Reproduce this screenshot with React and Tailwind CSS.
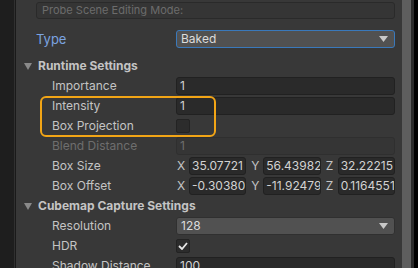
import React from "react";

const font = { fontFamily: "Inter, 'Noto Sans', sans-serif" };

function Fold() {
  return (
    <svg width="8" height="7" viewBox="0 0 8 7" className="shrink-0">
      <path d="M0 0 L8 0 L4 7 Z" fill="#8a8a8a" />
    </svg>
  );
}

function Arrow() {
  return (
    <svg width="9" height="6" viewBox="0 0 9 6" className="shrink-0">
      <path d="M0 0 L9 0 L4.5 6 Z" fill="#c8c8c8" />
    </svg>
  );
}

function Row({ label, disabled, children }) {
  return (
    <div className="flex h-[20px] shrink-0 items-center">
      <div
        className={
          "w-[160px] shrink-0 whitespace-nowrap pl-[36px] text-[12px] leading-none " +
          (disabled ? "text-[#6e6e6e]" : "text-[#c4c4c4]")
        }
      >
        {label}
      </div>
      <div className="flex min-w-0 flex-1 items-center">{children}</div>
    </div>
  );
}

function Field({ value, disabled }) {
  return (
    <div
      className={
        "flex h-[18px] flex-1 items-center overflow-hidden whitespace-nowrap rounded-[3px] border px-[3px] text-[12px] leading-none " +
        (disabled
          ? "border-[#2f2f2f] bg-[#353535] text-[#6e6e6e]"
          : "border-[#212121] bg-[#2a2a2a] text-[#d2d2d2]")
      }
    >
      {value}
    </div>
  );
}

function Vec({ items }) {
  return (
    <div className="flex min-w-0 flex-1 gap-[4px]">
      {items.map(([l, v]) => (
        <div key={l} className="flex min-w-0 flex-1 items-center">
          <span className="w-[13px] shrink-0 pl-[1px] text-[12px] leading-none text-[#c4c4c4]">{l}</span>
          <div className="flex h-[18px] min-w-0 flex-1 items-center overflow-hidden whitespace-nowrap rounded-[3px] border border-[#212121] bg-[#2a2a2a] px-[2px] text-[12px] leading-none text-[#d2d2d2]">
            {v}
          </div>
        </div>
      ))}
    </div>
  );
}

function Check({ checked }) {
  return (
    <div className="flex h-[14px] w-[14px] items-center justify-center rounded-[2px] border border-[#232323] bg-[#2c2c2c]">
      {checked && (
        <svg width="10" height="8" viewBox="0 0 10 8">
          <path d="M1 4 L4 7 L9 1" stroke="#e6e6e6" strokeWidth="1.8" fill="none" />
        </svg>
      )}
    </div>
  );
}

function Header({ label }) {
  return (
    <div className="flex h-[20px] shrink-0 items-center gap-[6px] pl-[8px]">
      <Fold />
      <span className="whitespace-nowrap text-[12px] font-bold leading-none text-[#c4c4c4]">{label}</span>
    </div>
  );
}

export default function App() {
  return (
    <div className="flex h-[268px] w-[418px] overflow-hidden bg-[#383838]" style={font}>
      <div className="w-[14px] shrink-0 bg-[#1e1e1e]" />
      <div className="w-[1px] shrink-0 bg-[#303030]" />
      <div className="w-[1px] shrink-0 bg-[#1a1a1a]" />
      <div className="relative flex min-w-0 flex-1 flex-col pr-[7px]">
        <div className="ml-[20px] mt-[2px] flex h-[17px] shrink-0 items-center rounded-[3px] border border-[#2a2a2a] bg-[#353535] px-[5px] text-[11px] leading-none text-[#6c6c6c]">
          Probe Scene Editing Mode:
        </div>
        <div className="mt-[10px] flex h-[20px] shrink-0 items-center">
          <div className="w-[160px] shrink-0 pl-[20px] text-[13px] leading-none text-[#7ba4e0]">Type</div>
          <div className="flex h-[18px] flex-1 items-center justify-between rounded-[3px] border border-[#3a79bb] bg-[#515151] pl-[4px] pr-[6px] text-[12px] leading-none text-[#dcdcdc]">
            <span>Baked</span>
            <Arrow />
          </div>
        </div>
        <div className="mt-[7px] shrink-0">
          <Header label="Runtime Settings" />
        </div>
        <Row label="Importance"><Field value="1" /></Row>
        <Row label="Intensity"><Field value="1" /></Row>
        <Row label="Box Projection"><Check /></Row>
        <Row label="Blend Distance" disabled><Field value="1" disabled /></Row>
        <Row label="Box Size">
          <Vec items={[["X", "35.07721"], ["Y", "56.43982"], ["Z", "32.22215"]]} />
        </Row>
        <Row label="Box Offset">
          <Vec items={[["X", "-0.303802"], ["Y", "-11.924791"], ["Z", "0.1164551"]]} />
        </Row>
        <Header label="Cubemap Capture Settings" />
        <Row label="Resolution">
          <div className="flex h-[18px] flex-1 items-center justify-between rounded-[3px] border border-[#303030] bg-[#515151] pl-[4px] pr-[6px] text-[12px] leading-none text-[#dcdcdc]">
            <span>128</span>
            <Arrow />
          </div>
        </Row>
        <Row label="HDR"><Check checked /></Row>
        <Row label="Shadow Distance"><Field value="100" /></Row>

        <div className="pointer-events-none absolute left-[24px] top-[96px] h-[41px] w-[176px] rounded-[6px] border-2 border-[#f2a516]" />
      </div>
      <div className="w-[9px] shrink-0 bg-[#5e5e5e]" />
      <div className="w-[3px] shrink-0 bg-[#2a2a2a]" />
      <div className="w-[4px] shrink-0 bg-black" />
    </div>
  );
}
